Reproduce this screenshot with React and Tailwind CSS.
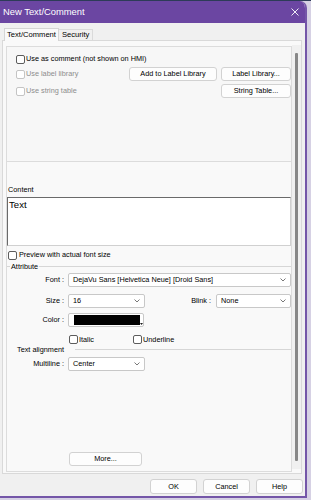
import React from 'react';

const FONT = { fontFamily: '"Liberation Sans", Arial, sans-serif' };

function Box({ disabled }) {
  return (
    <span
      className={`block w-[9px] h-[9px] shrink-0 rounded-[2px] border bg-white ${disabled ? 'border-[#c4c4c4]' : 'border-[#5c5c5c]'}`}
    />
  );
}

function Chevron() {
  return (
    <svg width="6" height="4" viewBox="0 0 6 4" className="shrink-0">
      <path d="M0.5 0.5 L3 3 L5.5 0.5" fill="none" stroke="#555" strokeWidth="0.8" />
    </svg>
  );
}

function Select({ value, className }) {
  return (
    <div className={`flex items-center justify-between h-[14px] bg-white border border-[#c8c8c8] rounded-[2px] pl-[4px] pr-[4px] ${className}`}>
      <span className="text-[7.3px] leading-none text-black">{value}</span>
      <Chevron />
    </div>
  );
}

function Btn({ children, className = '' }) {
  return (
    <div className={`flex items-center justify-center bg-[#fdfdfd] border border-[#d2d2d2] rounded-[3px] text-[7.3px] leading-none text-black ${className}`}>
      {children}
    </div>
  );
}

export default function App() {
  return (
    <div className="w-[311px] h-[500px] bg-[#d6d1e4] overflow-hidden" style={FONT}>
      <div className="h-[1px] bg-[#2d3b58]" />
      <div className="w-[307px] h-[497px] bg-[#f0f0f0] border-r-2 border-b-2 border-[#7456a8] rounded-tr-[7px] flex flex-col overflow-hidden">
        {/* Title bar */}
        <div className="h-[22px] bg-[#6b46a2] flex items-center justify-between pl-[3px] pr-[6px] shrink-0">
          <span className="text-[9.4px] text-white leading-none">New Text/Comment</span>
          <svg width="8" height="8" viewBox="0 0 8 8">
            <path d="M0.5 0.5 L7.5 7.5 M7.5 0.5 L0.5 7.5" stroke="#fff" strokeWidth="0.9" />
          </svg>
        </div>

        {/* Tabs */}
        <div className="h-[17px] flex items-end pl-[4px] shrink-0">
          <div className="h-[13px] px-[2px] bg-[#f9f9f9] border border-b-0 border-[#d5d5d5] flex items-center text-[7.6px] leading-none text-black relative top-[1px]">
            Text/Comment
          </div>
          <div className="h-[11px] px-[3px] border-t border-r border-[#dadada] flex items-center text-[7.6px] leading-none text-black">
            Security
          </div>
        </div>

        {/* Tab page */}
        <div className="ml-[2px] w-[300px] h-[434px] border border-[#d9d9d9] bg-[#f9f9f9] flex shrink-0">
          <div className="pl-[3px] pt-[5px] pb-[1px] flex">
            <div className="w-[286px] border border-[#dcdcdc] flex flex-col text-[7.3px] leading-none text-black">
              {/* Upper group */}
              <div className="h-[115px] border-b border-[#dcdcdc] bg-[#f7f7f7] pt-[7px] flex flex-col shrink-0">
                <div className="h-[10px] flex items-center pl-[9px] gap-[1px]">
                  <Box />
                  <span>Use as comment (not shown on HMI)</span>
                </div>
                <div className="mt-[3px] h-[14px] flex items-center pl-[9px]">
                  <Box disabled />
                  <span className="ml-[1px] text-[#8d8d8d] flex-1">Use label library</span>
                  <Btn className="w-[88px] h-[14px]">Add to Label Library</Btn>
                  <Btn className="ml-[4px] w-[70px] h-[14px]">Label Library...</Btn>
                </div>
                <div className="mt-[3px] h-[14px] flex items-center pl-[9px]">
                  <Box disabled />
                  <span className="ml-[1px] text-[#8d8d8d] flex-1">Use string table</span>
                  <Btn className="w-[70px] h-[14px]">String Table...</Btn>
                </div>
              </div>

              {/* Content */}
              <div className="mt-[23px] h-[9px] flex items-center pl-[1px]">Content</div>
              <div className="mt-[3px] h-[49px] bg-white border-t border-l border-[#6a6a6a] border-r border-b border-r-[#d0d0d0] border-b-[#d0d0d0] px-[1px] pt-[2px]">
                <span className="text-[9.6px] leading-none text-black">Text</span>
              </div>
              <div className="mt-[4px] h-[10px] flex items-center gap-[2px] pl-[1px]">
                <Box />
                <span>Preview with actual font size</span>
              </div>

              {/* Attribute */}
              <div className="mt-[2px] h-[9px] flex items-center">
                <div className="w-[3px] h-px bg-[#d6d6d6]" />
                <span className="px-[1px]">Attribute</span>
                <div className="flex-1 h-px bg-[#d6d6d6]" />
              </div>
              <div className="mt-[2px] h-[14px] flex items-center">
                <span className="w-[57px] text-right">Font :</span>
                <Select value="DejaVu Sans [Helvetica Neue] [Droid Sans]" className="ml-[4px] flex-1" />
              </div>
              <div className="mt-[7px] h-[14px] flex items-center">
                <span className="w-[57px] text-right">Size :</span>
                <Select value="16" className="ml-[4px] w-[77px]" />
                <span className="w-[66px] text-right">Blink :</span>
                <Select value="None" className="ml-[5px] flex-1" />
              </div>
              <div className="mt-[5px] h-[14px] flex items-center">
                <span className="w-[57px] text-right">Color :</span>
                <div className="ml-[4px] w-[76px] h-[14px] bg-white border border-[#c8c8c8] rounded-[2px] pl-[5px] pt-[1px] flex items-start">
                  <div className="w-[66px] h-[10px] bg-black" />
                  <svg width="3" height="2" viewBox="0 0 3 2" className="mt-[8px]">
                    <path d="M0 0 L3 0 L1.5 2 Z" fill="#222" />
                  </svg>
                </div>
              </div>
              <div className="mt-[8px] h-[9px] flex items-center">
                <div className="ml-[62px] flex items-center gap-[1px] w-[64px]">
                  <Box />
                  <span>Italic</span>
                </div>
                <div className="flex items-center gap-[1px]">
                  <Box />
                  <span>Underline</span>
                </div>
              </div>
              <div className="mt-[1px] h-[9px] flex items-center pl-[10px]">
                <span>Text alignment</span>
                <div className="ml-[11px] flex-1 h-px bg-[#d6d6d6]" />
              </div>
              <div className="mt-[3px] h-[14px] flex items-center">
                <span className="w-[57px] text-right">Multiline :</span>
                <Select value="Center" className="ml-[4px] w-[77px]" />
              </div>

              <div className="mt-auto mb-[5px] ml-[62px]">
                <Btn className="w-[73px] h-[14px]">More...</Btn>
              </div>
            </div>
          </div>
          {/* Scrollbar */}
          <div className="w-[9px] bg-[#f0f0f0] my-[4px] flex justify-center pt-[8px] pb-[8px]">
            <div className="w-[3px] bg-[#878787] rounded-[1px]" />
          </div>
        </div>

        {/* Footer */}
        <div className="flex-1 flex items-start justify-end pt-[5px] pr-[2px] gap-[6px]">
          <Btn className="w-[47px] h-[15px] border-[#4a7ccc]">OK</Btn>
          <Btn className="w-[47px] h-[15px]">Cancel</Btn>
          <Btn className="w-[47px] h-[15px]">Help</Btn>
        </div>
      </div>
    </div>
  );
}
